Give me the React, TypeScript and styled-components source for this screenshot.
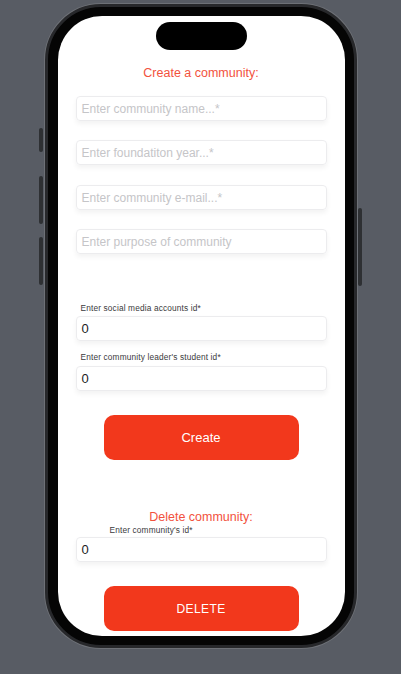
import React from "react";
import styled, { createGlobalStyle } from "styled-components";

const Global = createGlobalStyle`
  html, body {
    margin: 0;
    padding: 0;
    background: #585c64;
    font-family: "Liberation Sans", Arial, sans-serif;
  }
  * { box-sizing: border-box; }
`;

const Page = styled.div`
  width: 401px;
  height: 674px;
  display: flex;
  justify-content: center;
  padding-top: 4px;
  overflow: hidden;
`;

const Phone = styled.div`
  position: relative;
  width: 312px;
  height: 644px;
  border-radius: 56px;
  background: #050505;
  border: 3px solid #27282b;
  box-shadow: 0 0 0 1px #6e7177;
  padding: 9px 9px 9px 10px;
`;

const SideButton = styled.div<{ $side: "left" | "right"; $top: number; $h: number }>`
  position: absolute;
  ${(p) => (p.$side === "left" ? "left: -9px;" : "right: -8px;")}
  top: ${(p) => p.$top}px;
  width: 4px;
  height: ${(p) => p.$h}px;
  border-radius: 2px;
  background: #2e3033;
`;

const Screen = styled.div`
  position: relative;
  width: 287px;
  height: 620px;
  border-radius: 44px;
  background: #ffffff;
  overflow: hidden;
  display: flex;
  flex-direction: column;
  padding: 49px 18px 0 18px;
`;

const Island = styled.div`
  position: absolute;
  top: 6px;
  left: 98px;
  width: 91px;
  height: 28px;
  border-radius: 14px;
  background: #000;
`;

const Title = styled.div<{ $mt?: number }>`
  text-align: center;
  color: #f2523d;
  font-size: 12.5px;
  line-height: 16px;
  margin-top: ${(p) => p.$mt ?? 0}px;
`;

const Field = styled.div<{ $mt: number }>`
  margin-top: ${(p) => p.$mt}px;
  height: 25px;
  width: 251px;
  border: 1px solid #ececee;
  border-radius: 4px;
  box-shadow: 0 3px 5px rgba(0, 0, 0, 0.05);
  display: flex;
  align-items: center;
  padding-left: 5px;
  font-size: 12px;
  color: #c5c5c8;
`;

const ValueField = styled(Field)`
  font-size: 13px;
  color: #1c1c1e;
`;

const Label = styled.div<{ $mt: number; $indent?: number }>`
  margin-top: ${(p) => p.$mt}px;
  padding-left: ${(p) => p.$indent ?? 5}px;
  font-size: 8.3px;
  line-height: 10px;
  letter-spacing: 0.15px;
  color: #3a3a3c;
`;

const Button = styled.div<{ $mt: number; $size: number }>`
  margin: ${(p) => p.$mt}px auto 0;
  width: 195px;
  height: 45px;
  border-radius: 10px;
  background: #f2381c;
  color: #fff;
  display: flex;
  align-items: center;
  justify-content: center;
  font-size: ${(p) => p.$size}px;
  letter-spacing: ${(p) => (p.$size < 13 ? "0.4px" : "0")};
`;

export default function App() {
  return (
    <>
      <Global />
      <Page>
        <Phone>
          <SideButton $side="left" $top={121} $h={24} />
          <SideButton $side="left" $top={169} $h={48} />
          <SideButton $side="left" $top={230} $h={48} />
          <SideButton $side="right" $top={201} $h={78} />
          <Screen>
            <Island />
            <Title>Create a community:</Title>
            <Field $mt={15}>Enter community name...*</Field>
            <Field $mt={19}>Enter foundatiton year...*</Field>
            <Field $mt={20}>Enter community e-mail...*</Field>
            <Field $mt={19}>Enter purpose of community</Field>
            <Label $mt={49}>Enter social media accounts id*</Label>
            <ValueField $mt={3}>0</ValueField>
            <Label $mt={11}>Enter community leader's student id*</Label>
            <ValueField $mt={4}>0</ValueField>
            <Button $mt={24} $size={13}>Create</Button>
            <Title $mt={49}>Delete community:</Title>
            <Label $mt={0} $indent={34}>Enter community's id*</Label>
            <ValueField $mt={2}>0</ValueField>
            <Button $mt={24} $size={12}>DELETE</Button>
          </Screen>
        </Phone>
      </Page>
    </>
  );
}
